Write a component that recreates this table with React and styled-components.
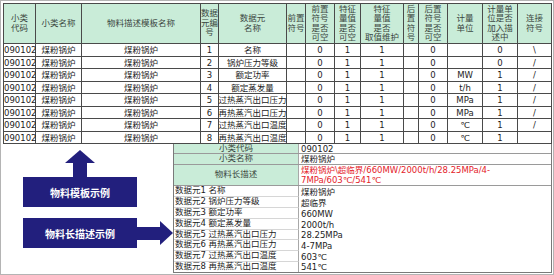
import React from 'react'
import styled, { createGlobalStyle } from 'styled-components'

const green = '#c9ecd8'
const navy = '#221f7d'
const line = '#4a4a4a'
const font = `"DejaVu Sans", "Noto Sans CJK SC", sans-serif`

const Global = createGlobalStyle`
    body {
        margin: 0;
        background: #fff;
        font-family: ${font};
    }
`

const Page = styled.div`
    width: 554px;
    height: 275px;
    box-sizing: border-box;
    border: 1px solid #b4b4b4;
    padding: 2px 1px 0 2px;
    background: #fff;
    overflow: hidden;
`

const Sheet = styled.div`
    display: grid;
    grid-template-columns: 31px 45px 118px 17px 67px 18px 28px 25px 42px 14px 28px 34px 34px 33px;
    grid-template-rows: 39px repeat(4, 12px 11px);
    gap: 1px;
    width: fit-content;
    background: ${line};
    border: 1px solid ${line};
`

const HeadCell = styled.div`
    background: ${green};
    color: #3b4741;
    font-size: 8.5px;
    line-height: 9.4px;
    white-space: pre-line;
    text-align: center;
    display: flex;
    align-items: center;
    justify-content: center;
    overflow: hidden;
`

const Cell = styled.div`
    background: #fff;
    color: #1c1c1c;
    font-size: 8.5px;
    line-height: 11px;
    white-space: nowrap;
    display: flex;
    align-items: center;
    justify-content: ${p => (p.$left ? 'flex-start' : 'center')};
    padding-top: 1px;
`

const Bottom = styled.div`
    display: flex;
`

const LeftPane = styled.div`
    width: 170px;
    box-sizing: border-box;
    padding: 6px 0 0 20px;
    display: flex;
    flex-direction: column;
    gap: 11px;
`

const UpArrow = styled.div`
    width: 114px;
    display: flex;
    flex-direction: column;
    align-items: center;
`

const UpHead = styled.div`
    width: 0;
    height: 0;
    border-left: 15px solid transparent;
    border-right: 15px solid transparent;
    border-bottom: 13px solid ${navy};
`

const UpShaft = styled.div`
    width: 14px;
    height: 14px;
    background: ${navy};
`

const RightArrow = styled.div`
    display: flex;
    align-items: center;
    position: relative;
    z-index: 1;
`

const RightShaft = styled.div`
    width: 29px;
    height: 13px;
    background: ${navy};
`

const RightHead = styled.div`
    width: 0;
    height: 0;
    border-top: 12px solid transparent;
    border-bottom: 12px solid transparent;
    border-left: 13px solid ${navy};
`

const Label = styled.div`
    width: 114px;
    height: 30px;
    flex-shrink: 0;
    background: ${navy};
    color: #fff;
    font-family: "Noto Sans CJK SC", sans-serif;
    font-weight: 700;
    font-size: 10px;
    display: flex;
    align-items: center;
    justify-content: center;
`

const Desc = styled.div`
    width: 379px;
    box-sizing: border-box;
    border: 1px solid #7a7a7a;
    border-top: none;
`

const DescRow = styled.div`
    height: ${p => p.$h}px;
    box-sizing: border-box;
    display: flex;
    border-bottom: ${p => (p.$line ? '1px solid #9a9a9a' : 'none')};
`

const Key = styled.div`
    width: 125px;
    box-sizing: border-box;
    border-right: 1px solid #a8a8a8;
    border-bottom: ${p => (p.$faint ? '1px solid #d6d6d6' : 'none')};
    background: ${p => (p.$head ? green : '#fff')};
    color: ${p => (p.$head ? '#3b4741' : '#1c1c1c')};
    font-size: 8.5px;
    line-height: 9.5px;
    white-space: nowrap;
    display: flex;
    align-items: center;
    justify-content: ${p => (p.$head ? 'center' : 'flex-start')};
    padding-left: ${p => (p.$head ? 0 : 1)}px;
`

const Val = styled.div`
    flex: 1;
    padding-left: 2px;
    color: ${p => (p.$red ? '#e4222a' : '#1c1c1c')};
    font-size: 8.5px;
    line-height: 10px;
    white-space: nowrap;
    display: flex;
    flex-direction: column;
    justify-content: center;
`

const heads = [
  '小类\n代码', '小类名称', '物料描述模板名称', '数据\n元编\n号', '数据元\n名称', '前置\n符号',
  '前置\n符号\n是否\n可空', '特征\n量值\n是否\n可空', '特征\n量值\n是否\n取值维护', '后\n置\n符\n号',
  '后置\n符号\n是否\n可空', '计量\n单位', '计量单\n位是否\n加入描\n述中', '连接\n符号',
]

const items = [
  ['名称', '', '0', '\\'],
  ['锅炉压力等级', '', '0', '/'],
  ['额定功率', 'MW', '1', '/'],
  ['额定蒸发量', 't/h', '1', '/'],
  ['过热蒸汽出口压力', 'MPa', '1', '/'],
  ['再热蒸汽出口压力', 'MPa', '1', '/'],
  ['过热蒸汽出口温度', '℃', '1', '/'],
  ['再热蒸汽出口温度', '℃', '1', ''],
]

const values = ['煤粉锅炉', '超临界', '660MW', '2000t/h', '28.25MPa', '4-7MPa', '603℃', '541℃']
const heights = [11, 11, 11, 11, 10, 11, 11, 10]

const App = () => {
  return (
    <Page>
      <Global />
      <Sheet>
        {heads.map(h => <HeadCell key={h}>{h}</HeadCell>)}
        {items.map(([name, unit, inDesc, sym], i) => (
          <React.Fragment key={name}>
            <Cell $left>090102</Cell>
            <Cell>煤粉锅炉</Cell>
            <Cell>煤粉锅炉</Cell>
            <Cell>{i + 1}</Cell>
            <Cell>{name}</Cell>
            <Cell />
            <Cell>0</Cell>
            <Cell>1</Cell>
            <Cell>1</Cell>
            <Cell />
            <Cell>0</Cell>
            <Cell>{unit}</Cell>
            <Cell>{inDesc}</Cell>
            <Cell>{sym}</Cell>
          </React.Fragment>
        ))}
      </Sheet>
      <Bottom>
        <LeftPane>
          <UpArrow>
            <UpHead />
            <UpShaft />
            <Label>物料模板示例</Label>
          </UpArrow>
          <RightArrow>
            <Label>物料长描述示例</Label>
            <RightShaft />
            <RightHead />
          </RightArrow>
        </LeftPane>
        <Desc>
          <DescRow $h={10} $line>
            <Key $head>小类代码</Key>
            <Val>090102</Val>
          </DescRow>
          <DescRow $h={11} $line>
            <Key $head>小类名称</Key>
            <Val>煤粉锅炉</Val>
          </DescRow>
          <DescRow $h={21} $line>
            <Key $head>物料长描述</Key>
            <Val $red>
              <span>煤粉锅炉\超临界/660MW/2000t/h/28.25MPa/4-</span>
              <span>7MPa/603℃/541℃</span>
            </Val>
          </DescRow>
          {items.map(([name], i) => (
            <DescRow key={name} $h={heights[i]}>
              <Key $faint={i < 7}>{`数据元${i + 1} ${i === 1 ? ' ' : ''}${name}`}</Key>
              <Val>{values[i]}</Val>
            </DescRow>
          ))}
        </Desc>
      </Bottom>
    </Page>
  )
}

export default App
